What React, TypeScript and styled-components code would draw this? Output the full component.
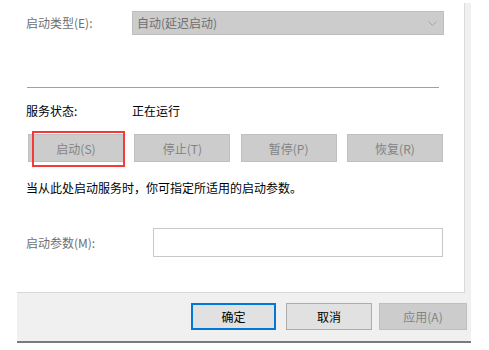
import React from 'react';
import styled, { createGlobalStyle } from 'styled-components';

const GlobalStyle = createGlobalStyle`
  html, body {
    margin: 0;
    padding: 0;
    background: #ffffff;
  }
  body {
    font-family: "Noto Sans CJK SC", "Liberation Sans", sans-serif;
    font-size: 12px;
    color: #000000;
  }
`;

const Window = styled.div`
  margin-left: 17px;
  width: 454px;
  display: flex;
  flex-direction: column;
`;

const Body = styled.div`
  display: flex;
  height: 293px;
`;

const Panel = styled.div`
  width: 447px;
  box-sizing: border-box;
  background: #ffffff;
  border-bottom: 1px solid #d7d7d7;
  padding: 11px 0 0 9px;
  display: flex;
  flex-direction: column;
`;

const Strip = styled.div`
  width: 7px;
  margin-top: 3px;
  box-sizing: border-box;
  background: #f0f0f0;
  border-left: 1px solid #dadada;
`;

const Row = styled.div<{ top?: number; height?: number }>`
  display: flex;
  align-items: center;
  margin-top: ${p => p.top ?? 0}px;
  height: ${p => p.height ?? 16}px;
  line-height: 16px;
  white-space: nowrap;
`;

const Label = styled.span<{ width: number; disabled?: boolean }>`
  width: ${p => p.width}px;
  flex-shrink: 0;
  color: ${p => (p.disabled ? '#6f6f6f' : '#000000')};
`;

const Combo = styled.div`
  width: 312px;
  height: 24px;
  box-sizing: border-box;
  background: #cccccc;
  border: 1px solid #bdbdbd;
  display: flex;
  align-items: center;
  justify-content: space-between;
  padding: 0 6px 0 4px;
  color: #6f6f6f;
`;

const Separator = styled.div`
  margin: 52px 0 0 1px;
  width: 412px;
  height: 1px;
  background: #a0a0a0;
`;

const ButtonRow = styled.div`
  position: relative;
  margin: 15px 0 0 2px;
  width: 415px;
  display: flex;
  justify-content: space-between;
`;

const ServiceButton = styled.div`
  width: 96px;
  height: 28px;
  box-sizing: border-box;
  background: #cccccc;
  border: 1px solid #bfbfbf;
  color: #838383;
  display: flex;
  align-items: center;
  justify-content: center;
`;

const Highlight = styled.div`
  position: absolute;
  left: 4px;
  top: -3px;
  width: 93px;
  height: 36px;
  box-sizing: border-box;
  border: 2px solid #f53a3a;
  pointer-events: none;
`;

const Input = styled.div`
  width: 290px;
  height: 29px;
  box-sizing: border-box;
  background: #ffffff;
  border: 1px solid #c8c8c8;
`;

const Footer = styled.div`
  height: 50px;
  box-sizing: border-box;
  background: #f0f0f0;
  border-bottom: 2px solid #7a7a7a;
  display: flex;
  justify-content: flex-end;
  align-items: flex-start;
  padding: 10px 4px 0 0;
`;

const DialogButton = styled.div<{ variant?: 'default' | 'disabled'; gap?: number; width?: number }>`
  width: ${p => p.width ?? 86}px;
  height: 27px;
  margin-left: ${p => p.gap ?? 0}px;
  box-sizing: border-box;
  display: flex;
  align-items: center;
  justify-content: center;
  background: ${p => (p.variant === 'disabled' ? '#cccccc' : '#e1e1e1')};
  border: ${p =>
    p.variant === 'default'
      ? '2px solid #0078d7'
      : p.variant === 'disabled'
      ? '1px solid #bfbfbf'
      : '1px solid #adadad'};
  color: ${p => (p.variant === 'disabled' ? '#838383' : '#000000')};
`;

const Chevron = () => (
  <svg width="9" height="5" viewBox="0 0 9 5">
    <path d="M0.5 0.5 L4.5 4.5 L8.5 0.5" fill="none" stroke="#a3a3a3" strokeWidth="1" />
  </svg>
);

const App: React.FC = () => {
  return (
    <>
      <GlobalStyle />
      <Window>
        <Body>
          <Panel>
            <Row height={24}>
              <Label width={106} disabled>启动类型(E):</Label>
              <Combo>
                <span>自动(延迟启动)</span>
                <Chevron />
              </Combo>
            </Row>

            <Separator />

            <Row top={15}>
              <Label width={106}>服务状态:</Label>
              <span>正在运行</span>
            </Row>

            <ButtonRow>
              <ServiceButton>启动(S)</ServiceButton>
              <ServiceButton>停止(T)</ServiceButton>
              <ServiceButton>暂停(P)</ServiceButton>
              <ServiceButton>恢复(R)</ServiceButton>
              <Highlight />
            </ButtonRow>

            <Row top={18}>
              <Label width={400}>当从此处启动服务时，你可指定所适用的启动参数。</Label>
            </Row>

            <Row top={32} height={29}>
              <Label width={127} disabled>启动参数(M):</Label>
              <Input />
            </Row>
          </Panel>
          <Strip />
        </Body>

        <Footer>
          <DialogButton variant="default" width={85}>确定</DialogButton>
          <DialogButton gap={10}>取消</DialogButton>
          <DialogButton variant="disabled" gap={7} width={88}>应用(A)</DialogButton>
        </Footer>
      </Window>
    </>
  );
};

export default App;
